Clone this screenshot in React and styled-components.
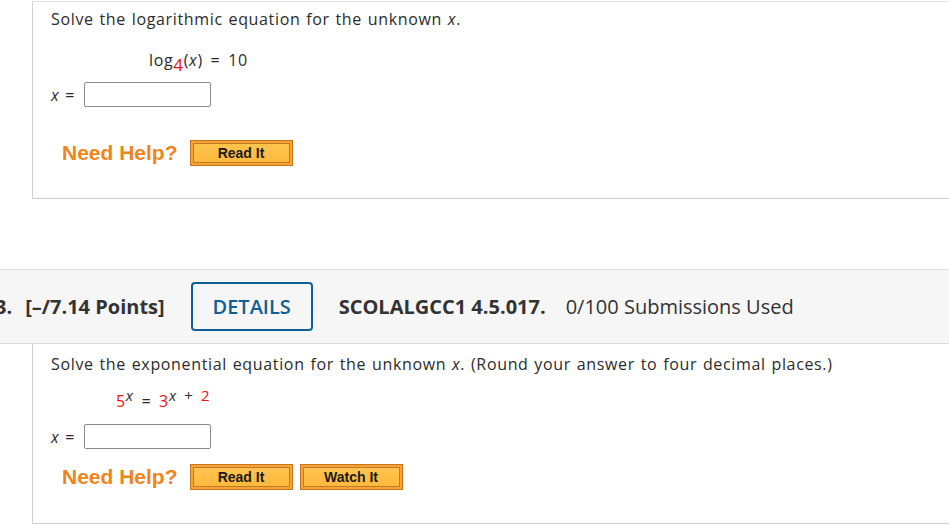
import styled, { createGlobalStyle } from "styled-components";

const GlobalStyle = createGlobalStyle`
  html, body {
    margin: 0;
    padding: 0;
    background: #fff;
    overflow: hidden;
  }
  body {
    font-family: "Open Sans", sans-serif;
    color: #2b2b2b;
  }
`;

const Page = styled.div`
  width: 949px;
  height: 525px;
  padding-top: 1px;
  box-sizing: border-box;
`;

const Panel = styled.div`
  margin-left: 32px;
  border-left: 1px solid #cfcfcf;
  border-bottom: 1px solid #cfcfcf;
  border-top: ${(p) => (p.$top ? "1px solid #e3e3e3" : "none")};
  height: ${(p) => p.$height}px;
  padding: ${(p) => p.$pad}px 0 0 18px;
  box-sizing: border-box;
  font-family: "Open Sans", sans-serif;
  font-size: 16px;
  word-spacing: 1px;
  letter-spacing: 0.65px;
`;

const Prompt = styled.div`
  line-height: 18px;
  height: 18px;
  white-space: nowrap;
`;

const Equation = styled.div`
  margin: ${(p) => p.$gap}px 0 0 ${(p) => p.$indent}px;
  height: 20px;
  line-height: 20px;
  white-space: pre;
  word-spacing: 3px;
`;

const Red = styled.span`
  color: #ee1111;
`;

const Var = styled.i`
  font-style: italic;
`;

const Sub = styled.sub`
  font-size: 17px;
  line-height: 0;
  vertical-align: -5px;
`;

const Sup = styled.sup`
  font-size: 15px;
  line-height: 0;
  vertical-align: 6px;
`;

const AnswerRow = styled.div`
  display: flex;
  align-items: center;
  gap: 9px;
  margin-top: ${(p) => p.$gap}px;
`;

const Input = styled.div`
  width: 127px;
  height: 25px;
  box-sizing: border-box;
  border: 1px solid #8a8a8a;
  border-radius: 2px;
  background: #fff;
`;

const HelpRow = styled.div`
  display: flex;
  align-items: center;
  margin: ${(p) => p.$gap}px 0 0 11px;
  height: 26px;
  word-spacing: 0;
  letter-spacing: 0;
`;

const NeedHelp = styled.span`
  font-family: "Liberation Sans", Arial, sans-serif;
  font-weight: bold;
  font-size: 21px;
  color: #f0851a;
  margin-right: 12px;
`;

const HelpButton = styled.div`
  width: 103px;
  height: 26px;
  box-sizing: border-box;
  border: 1px solid #c9741f;
  background: #f6a334;
  padding: 2px;
  margin-right: 7px;
  display: flex;
`;

const HelpButtonFace = styled.div`
  flex: 1;
  border: 1px solid #c07a2c;
  background: linear-gradient(#ffc44f, #ffb93d);
  display: flex;
  align-items: center;
  justify-content: center;
  font-family: "Liberation Sans", Arial, sans-serif;
  font-weight: bold;
  font-size: 14px;
  color: #1a1a1a;
`;

const Spacer = styled.div`
  height: 70px;
`;

const Header = styled.div`
  height: 75px;
  background: #f6f6f6;
  border-top: 1px solid #e0e0e0;
  border-bottom: 1px solid #dcdcdc;
  box-sizing: border-box;
  display: flex;
  align-items: center;
  font-family: "Open Sans", sans-serif;
  font-size: 20px;
  color: #333;
  white-space: nowrap;
`;

const Number = styled.span`
  font-weight: 700;
  margin-left: -5px;
`;

const Points = styled.span`
  font-weight: 700;
  margin-left: 13px;
`;

const DetailsButton = styled.div`
  width: 122px;
  height: 49px;
  box-sizing: border-box;
  border: 2px solid #0d6196;
  border-radius: 4px;
  display: flex;
  align-items: center;
  justify-content: center;
  color: #0d6196;
  font-weight: 600;
  margin-left: 26px;
`;

const Code = styled.span`
  font-weight: 700;
  margin-left: 26px;
`;

const Submissions = styled.span`
  margin-left: 20px;
  font-weight: 400;
`;

function ReadButton({ label }) {
  return (
    <HelpButton>
      <HelpButtonFace>{label}</HelpButtonFace>
    </HelpButton>
  );
}

export default function App() {
  return (
    <>
      <GlobalStyle />
      <Page>
        <Panel $top $height={198} $pad={8}>
          <Prompt>
            Solve the logarithmic equation for the unknown <Var>x</Var>.
          </Prompt>
          <Equation $gap={22} $indent={98}>
            log<Sub><Red>4</Red></Sub>(<Var>x</Var>) = 10
          </Equation>
          <AnswerRow $gap={12}>
            <span>
              <Var>x</Var> =
            </span>
            <Input />
          </AnswerRow>
          <HelpRow $gap={33}>
            <NeedHelp>Need Help?</NeedHelp>
            <ReadButton label="Read It" />
          </HelpRow>
        </Panel>
        <Spacer />
        <Header>
          <Number>3.</Number>
          <Points>[–/7.14 Points]</Points>
          <DetailsButton>DETAILS</DetailsButton>
          <Code>SCOLALGCC1 4.5.017.</Code>
          <Submissions>0/100 Submissions Used</Submissions>
        </Header>
        <Panel $height={180} $pad={11}>
          <Prompt>
            Solve the exponential equation for the unknown <Var>x</Var>. (Round your answer to four decimal places.)
          </Prompt>
          <Equation $gap={18} $indent={65}>
            <Red>5</Red>
            <Sup><Var>x</Var></Sup> = <Red>3</Red>
            <Sup><Var>x</Var> + <Red>2</Red></Sup>
          </Equation>
          <AnswerRow $gap={13}>
            <span>
              <Var>x</Var> =
            </span>
            <Input />
          </AnswerRow>
          <HelpRow $gap={15}>
            <NeedHelp>Need Help?</NeedHelp>
            <ReadButton label="Read It" />
            <ReadButton label="Watch It" />
          </HelpRow>
        </Panel>
      </Page>
    </>
  );
}
